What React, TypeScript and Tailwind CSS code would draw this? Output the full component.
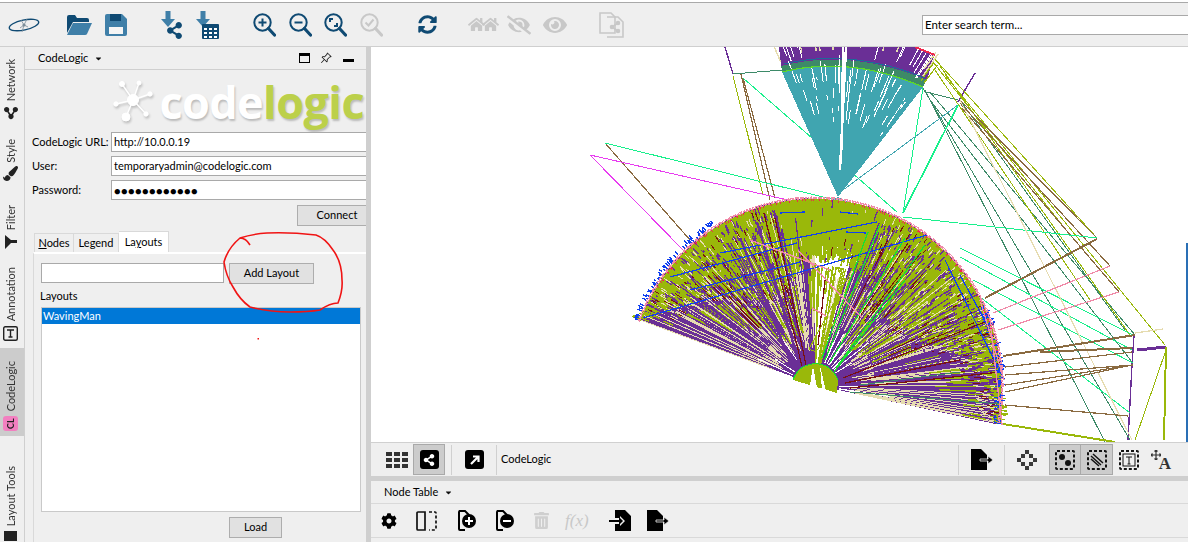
import React from "react";
import { FaShareAlt, FaSyncAlt, FaHome, FaEye, FaEyeSlash, FaCog, FaTrashAlt, FaPaintBrush, FaCaretDown } from "react-icons/fa";
import { BsPinAngle } from "react-icons/bs";

const NAVY = "#0f4a73";
const STEEL = "#3f7fa8";
const FONT = "font-['Lato',sans-serif]";

// --- graph drawing -----------------------------------------------------------

const COLORS = {
  purple: "#6a2f96",
  cream: "#e6dcb0",
  olive: "#9ab80a",
  darkred: "#7a1010",
  blue: "#1040f0",
  green: "#18e030",
  pink: "#f08aa8",
  teal: "#40a5b0",
  spring: "#18f08c",
  brown: "#8a6a40",
  moss: "#3d8a68",
  magenta: "#e83cf0",
  red: "#f0284c",
  white: "#ffffff",
};
type Tone = keyof typeof COLORS;

function rng(seed: number) {
  return () => {
    seed = (seed + 0x6d2b79f5) | 0;
    let t = Math.imul(seed ^ (seed >>> 15), 1 | seed);
    t = (t + Math.imul(t ^ (t >>> 7), 61 | t)) ^ t;
    return ((t ^ (t >>> 14)) >>> 0) / 4294967296;
  };
}

const polar = (cx: number, cy: number, r: number, deg: number) => {
  const a = (deg * Math.PI) / 180;
  return `${(cx + r * Math.cos(a)).toFixed(1)} ${(cy + r * Math.sin(a)).toFixed(1)}`;
};

const ray = (cx: number, cy: number, r0: number, r1: number, deg: number) =>
  `M${polar(cx, cy, r0, deg)}L${polar(cx, cy, r1, deg)}`;

// closed ring sector between two radii
function sector(cx: number, cy: number, r0: number, r1: number, a0: number, a1: number) {
  const big = a1 - a0 > 180 ? 1 : 0;
  return (
    `M${polar(cx, cy, r0, a0)}L${polar(cx, cy, r1, a0)}` +
    `A${r1} ${r1} 0 ${big} 1 ${polar(cx, cy, r1, a1)}` +
    `L${polar(cx, cy, r0, a1)}A${r0} ${r0} 0 ${big} 0 ${polar(cx, cy, r0, a0)}Z`
  );
}

const OLIVE_EDGE: [number, number][] = [
  [200, 176], [210, 152], [225, 118], [240, 92], [255, 96], [262, 112], [270, 122], [285, 122],
  [295, 112], [310, 88], [325, 96], [340, 112], [350, 146], [360, 166], [373, 178],
];

function oliveEdge(deg: number) {
  for (let i = 1; i < OLIVE_EDGE.length; i++) {
    const [a0, r0] = OLIVE_EDGE[i - 1];
    const [a1, r1] = OLIVE_EDGE[i];
    if (deg <= a1) return r0 + ((r1 - r0) * (deg - a0)) / (a1 - a0);
  }
  return 178;
}

function lowerFan() {
  const rand = rng(19);
  const cx = 815;
  const cy = 385;
  const R = 187;
  const layers: { tone: Tone; width: number; d: string }[] = [];
  const add = (tone: Tone, d: string, width = 1) => layers.push({ tone, width, d });

  // radial bundle
  let cream = "";
  let darkred = "";
  let olive = "";
  let white = "";
  for (let a = 200.4; a <= 372.2; a += 0.42) {
    const open = a > 270 && a < 286;
    const p = rand();
    if (open) {
      if (p < 0.16) cream += ray(cx, cy, 20, 110, a);
      else if (p < 0.3) olive += ray(cx, cy, 20, 120, a);
      continue;
    }
    if (p < 0.34) cream += ray(cx, cy, 34 + rand() * 30, R, a);
    else if (p < 0.39) darkred += ray(cx, cy, 50 + rand() * 60, R, a);
    else if (p < 0.42) white += ray(cx, cy, 24, 40 + rand() * 40, a);
  }
  const fill = `${sector(cx, cy, 20, R, 200.4, 270)}${sector(cx, cy, 20, R, 286, 372.2)}`;
  layers.push({ tone: "purple", width: -1, d: fill });
  add("cream", cream, 1);
  add("darkred", darkred, 1);
  add("white", white, 1);

  // olive crown under the arc
  for (let a = 200.4; a <= 372.2; a += 0.2) {
    const edge = oliveEdge(a);
    if (rand() < 0.93) olive += ray(cx, cy, edge + rand() * 22, R - 1, a);
    if (rand() < 0.22) olive += ray(cx, cy, edge - rand() * 50, edge - rand() * 10, a);
  }
  add("olive", olive, 1.4);

  // long streaks through the crown
  let purple = "";
  let red = "";
  let cream2 = "";
  for (let a = 206; a < 352; a += 0.5 + rand() * 2.2) {
    if (a > 264 && a < 290) continue;
    const p = rand();
    const outer = R - 10 - rand() * 40;
    if (p < 0.6) purple += ray(cx, cy, 60, outer, a);
    else if (p < 0.85) cream2 += ray(cx, cy, 70, outer, a);
    else red += ray(cx, cy, 80, outer, a);
  }
  add("purple", purple, 1.2);
  add("cream", cream2, 1);
  add("darkred", red, 1);

  // specks spread through the crown
  let speckPurple = "";
  let speckCream = "";
  let speckRed = "";
  for (let i = 0; i < 1500; i++) {
    const a = 204 + rand() * 166;
    if (a > 258 && a < 292 && rand() < 0.9) continue;
    const edge = oliveEdge(a);
    const r = edge - 10 + rand() * (R - edge + 4);
    const piece = ray(cx, cy, r, r + 2 + rand() * 7, a);
    const p = rand();
    if (p < 0.6) speckPurple += piece;
    else if (p < 0.88) speckCream += piece;
    else speckRed += piece;
  }
  add("purple", speckPurple, 1.3);
  add("cream", speckCream);
  add("darkred", speckRed);

  add("purple", "M800 366L757 222M805 365L776 215M794 370L740 238M812 362L806 262", 2.4);
  add("darkred", "M802 366L764 213M806 365L775 218M825 280L818 345M843 378L985 322M850 388L1000 372M845 383L960 360", 1.2);
  add("moss", "M850 392L1000 404M860 385L960 372", 1);
  add("olive", "M809 349L856 262L868 266L816 352Z", 1);
  add("cream", "M806 348L800 270", 1.6);

  // blue chords and edge jitter
  let blueEdge = "";
  for (let i = 0; i < 170; i++) {
    const left = i < 80;
    const a = left ? 200 + rand() * 38 : 335 + rand() * 37;
    const r = left ? R + rand() * 4 : R - 8 + rand() * 8;
    blueEdge += ray(cx, cy, r, r + 2 + rand() * 3, a);
  }
  add("blue", blueEdge, 1.4);
  add(
    "blue",
    "M643 318L927 235M670 277L797 243M720 253L877 222M690 290L800 262M780 213L805 212M840 212L858 214M846 232L866 233M945 260L1002 376M960 275L990 330",
    1.2,
  );
  add("green", "M825 360L880 225M830 362L905 238M836 368L925 245M822 358L868 232M834 372L905 280", 1.3);
  add("pink", "M798 250L862 318M750 240L830 270M812 308L826 316M990 320L1002 425M980 300L1004 380", 1.4);

  let rim = "";
  for (let a = 200; a < 372; a += 0.5) rim += ray(cx, cy, R - 1, R + 1.5, a);
  add("pink", rim, 1.2);
  let redRim = "";
  for (let a = 212; a < 350; a += rand() * 2.5 + 0.4) redRim += ray(cx, cy, R - 3, R - 1, a);
  add("red", redRim, 1);
  return layers;
}

function upperFan() {
  const rand = rng(7);
  const cx = 838;
  const cy = 197;
  let white = "";
  let cream = "";
  let olive = "";
  for (let a = 247; a <= 307; a += 0.5) {
    const p = rand();
    if (p < 0.16) cream += ray(cx, cy, 146 + rand() * 10, 175, a);
    else if (p < 0.26) white += ray(cx, cy, 142 + rand() * 14, 175, a);
    else if (a > 292 && p < 0.42) olive += ray(cx, cy, 143, 165, a);
  }
  for (let i = 0; i < 60; i++) {
    const a = 248 + rand() * 58;
    const r = 70 + rand() * 55;
    white += ray(cx, cy, r, r + 3 + rand() * 22, a);
  }
  return { white, cream, olive };
}

const LINES: [Tone, number, string][] = [
  ["purple", 1.4, "M725 47L733 74M958 102L975 73M1134 335L1132 365L1128 440"],
  ["moss", 1, "M733 74L782 70M923 88L1130 440M925 90L1105 442M930 92L1135 335M926 92L958 100M930 100L1132 362M960 100L1125 330"],
  ["olive", 1, "M733 76L763 195M933 57L1097 238M933 62L1070 235M940 66L1130 335M945 75L1165 345M935 70L1090 300M1166 350L1135 440"],
  ["brown", 1.2, "M741 74L770 200M743 78L775 198M605 143L690 240M960 100L1097 238M960 103L1110 266M962 108L1119 292"],
  ["spring", 1, "M743 78L897 212M605 143L835 200M903 213L923 88M903 217L1097 238M960 248L1133 335M960 257L1132 350M973 280L1133 363M980 297L1130 413"],
  ["magenta", 1, "M590 155L797 202M590 155L685 252"],
  ["teal", 1, "M843 190L958 105"],
  ["spring", 1.7, "M903 213L958 105"],
  ["cream", 1.2, "M960 100L1132 440M1135 333L1163 329"],
  ["brown", 2, "M985 298L1097 239M1003 356L1135 335M1040 352L1132 348"],
  ["brown", 1.2, "M1005 367L1132 352M1005 375L1133 365M1005 385L1132 365M1005 392L1132 365M1005 405L1128 416"],
  ["pink", 1.2, "M993 313L1110 266M998 330L1119 292"],
  ["purple", 3, "M1137 350L1166 347"],
  ["olive", 2, "M1166 347L1164 440M1003 424L1115 442"],
];

function GraphCanvas() {
  const lower = lowerFan();
  const upper = upperFan();
  return (
    <svg viewBox="371 47 817 395" className="w-full h-full block" shapeRendering="crispEdges">
      {LINES.map(([tone, width, d], i) => (
        <path key={i} d={d} stroke={COLORS[tone]} strokeWidth={width} fill="none" />
      ))}
      {/* upper fan */}
      <path d="M838 197L782 72Q850 55 923 87Z" fill={COLORS.teal} />
      <path d="M782 72Q850 55 923 87L927 78Q850 46 781 64Z" fill={COLORS.moss} />
      <path d="M781 66Q850 48 927 80L934 55L915 47H779Z" fill={COLORS.purple} />
      <path d={upper.cream} stroke={COLORS.cream} strokeWidth={1.4} fill="none" />
      <path d={upper.olive} stroke={COLORS.olive} strokeWidth={1.2} fill="none" />
      <path d={upper.white} stroke="#fff" strokeWidth={1} fill="none" />
      <path d="M782 72Q850 55 923 87" stroke="#5bd82a" strokeWidth={1.2} fill="none" />
      <path d="M784 64Q850 48 925 78" stroke="#1d6a9a" strokeWidth={1} fill="none" />
      <path d="M915 47L935 55" stroke={COLORS.red} strokeWidth={2} fill="none" />
      <path d="M843 47L842 150M846 47L840 170" stroke="#fff" strokeWidth={2.5} fill="none" />
      <path d="M838 197L856 206L820 206Z" fill={COLORS.teal} />

      {/* lower fan */}
      {lower.map((l, i) =>
        l.width < 0 ? (
          <path key={i} d={l.d} fill={COLORS[l.tone]} />
        ) : (
          <path key={i} d={l.d} stroke={COLORS[l.tone]} strokeWidth={l.width} fill="none" />
        ),
      )}
      <path d="M793 380L837 393L838 380Q830 362 812 364Q798 366 793 380Z" fill={COLORS.olive} />
      <path d="M793 380Q798 366 812 364Q830 362 838 380" stroke={COLORS.green} fill="none" />
      <path d="M810 385L813 366L817 388ZM822 390L820 366L826 391Z" fill="#fff" />
      <path d="M1187 243V442" stroke="#2a6fb5" strokeWidth={2} />
    </svg>
  );
}

// --- icons ------------------------------------------------------------------

function AppLogo() {
  return (
    <svg viewBox="0 0 32 18" className="w-8 h-[18px]" fill="none" stroke={NAVY}>
      <ellipse cx="16" cy="9" rx="15" ry="5" strokeWidth="1.4" transform="rotate(-12 16 9)" />
      <path d="M16 9L13 4M16 9L19 3M16 9L12 12M16 9L20 11M16 9L14 16" stroke="#7b8d99" strokeWidth="0.8" />
      <circle cx="16" cy="9" r="1.6" fill="#7b8d99" stroke="none" />
    </svg>
  );
}

function FolderIcon() {
  return (
    <svg viewBox="0 0 25 22" className="w-[25px] h-[22px]">
      <path d="M0 3q0-2 2-2h6l2 3h10q2 0 2 2v2H6L0 19Z" fill={NAVY} />
      <path d="M6 9h19l-5 11q-.5 1-2 1H0Z" fill={STEEL} />
    </svg>
  );
}

function SaveIcon() {
  return (
    <svg viewBox="0 0 22 22" className="w-[22px] h-[22px]">
      <path d="M0 2q0-2 2-2h15l5 5v15q0 2-2 2H2q-2 0-2-2Z" fill={STEEL} />
      <path d="M5 0h11v7H5Z" fill={NAVY} />
      <path d="M4 13h14v7H4Z" fill="#f5f5f5" />
    </svg>
  );
}

function DownArrow({ tone }: { tone: string }) {
  return (
    <svg viewBox="0 0 14 16" className="w-[14px] h-4">
      <path d="M4.5 0h5v8H14L7 16 0 8h4.5Z" fill={tone} />
    </svg>
  );
}

function ShareDown() {
  return (
    <div className="relative w-[22px] h-7">
      <DownArrow tone={STEEL} />
      <FaShareAlt className="absolute right-0 bottom-0 text-[17px]" color={NAVY} />
    </div>
  );
}

function TableDown() {
  return (
    <div className="relative w-[23px] h-7">
      <div className="absolute left-0 top-0">
        <DownArrow tone={STEEL} />
      </div>
      <svg viewBox="0 0 17 15" className="absolute right-0 bottom-0 w-[17px] h-[15px]">
        <path d="M0 1q0-1 1-1h15q1 0 1 1v13q0 1-1 1H1q-1 0-1-1Z" fill={NAVY} />
        <path d="M2 4h3v2H2Zm5 0h3v2H7Zm5 0h3v2h-3ZM2 8h3v2H2Zm5 0h3v2H7Zm5 0h3v2h-3ZM2 12h3v2H2Zm5 0h3v2H7Zm5 0h3v2h-3Z" fill="#fff" />
      </svg>
    </div>
  );
}

function Magnifier({ tone, mark }: { tone: string; mark: string }) {
  return (
    <svg viewBox="0 0 23 24" className="w-[23px] h-6" fill="none" stroke={tone}>
      <circle cx="9.5" cy="9.5" r="8.2" strokeWidth="2" />
      <path d="M15.5 15.5L21.5 22" strokeWidth="3.2" strokeLinecap="round" />
      <path d={mark} strokeWidth="2" />
    </svg>
  );
}

function DocShare() {
  return (
    <svg viewBox="0 0 25 26" className="w-[25px] h-[26px]" fill="none" stroke="#c8c8c8" strokeWidth="1.6">
      <path d="M1 1h11l4 4v16H1Z" />
      <path d="M8 5h11l5 5v15H8" />
      <circle cx="13" cy="15" r="1.5" fill="#c8c8c8" />
      <circle cx="19" cy="11" r="1.5" fill="#c8c8c8" />
      <circle cx="19" cy="19" r="1.5" fill="#c8c8c8" />
      <path d="M13 15L19 11M13 15L19 19" />
    </svg>
  );
}

function DocArrow({ incoming }: { incoming?: boolean }) {
  return (
    <svg viewBox="0 0 22 21" className="w-[22px] h-[21px]">
      {incoming ? (
        <>
          <path d="M6 0h10l6 6v15H6v-7h5v2l5-5-5-5v2H6Z" />
          <path d="M0 10h10V7l4 4-4 4v-3H0Z" />
        </>
      ) : (
        <>
          <path d="M0 0h10l6 6v15H0Z" />
          <path d="M9 10h8V7l5 4-5 4v-3H9Z" stroke="#efefef" strokeWidth="0.8" />
        </>
      )}
    </svg>
  );
}

function DocBadge({ minus }: { minus?: boolean }) {
  return (
    <svg viewBox="0 0 18 21" className="w-[18px] h-[21px]" fill="none">
      <path d="M7 1H2Q1 1 1 2v17q0 1 1 1h5" stroke="#000" strokeWidth="2" />
      <path d="M1 1h6l4 4" stroke="#000" strokeWidth="2" />
      <circle cx="11" cy="11" r="7" fill="#000" />
      <path d={minus ? "M7 11h8" : "M7 11h8M11 7v8"} stroke="#fff" strokeWidth="2" />
    </svg>
  );
}

function DashBox({ children }: { children: React.ReactNode }) {
  return (
    <svg viewBox="0 0 20 20" className="w-5 h-5" fill="none">
      <rect x="1" y="1" width="18" height="18" rx="1" stroke="#111" strokeWidth="2" strokeDasharray="3 2" />
      {children}
    </svg>
  );
}

function Bar({ className = "" }: { className?: string }) {
  return <div className={`w-px h-[30px] bg-[#d0d0d0] ${className}`} />;
}

function SideTab({ label, icon, className }: { label: string; icon: React.ReactNode; className: string }) {
  return (
    <div className={`flex flex-col items-center shrink-0 pr-[3px] ${className}`}>
      <span className="[writing-mode:vertical-rl] rotate-180 text-[11px] leading-[14px] text-[#333] whitespace-nowrap shrink-0">{label}</span>
      {icon}
    </div>
  );
}

function Button({ label, className }: { label: string; className: string }) {
  return (
    <button className={`bg-[#e1e1e1] border border-[#adadad] text-[11px] text-black flex items-center justify-center shrink-0 ${className}`}>
      {label}
    </button>
  );
}

function Field({ label, value, secret }: { label: string; value: string; secret?: boolean }) {
  return (
    <div className="flex items-center h-5">
      <span className="w-[79px] shrink-0 text-[11px] text-black whitespace-nowrap">{label}</span>
      <div className="w-[270px] h-5 shrink-0 bg-white border border-[#a9a9a9] pl-[2px] flex items-center text-[11px] text-black whitespace-nowrap">
        {secret ? <span className="tracking-[0.4px] leading-none">{value}</span> : value}
      </div>
    </div>
  );
}

// --- page -------------------------------------------------------------------

export default function App() {
  return (
    <div className={`relative w-[1188px] h-[542px] overflow-hidden bg-[#efefef] flex flex-col ${FONT}`}>
      {/* top toolbar */}
      <div className="h-[47px] shrink-0 bg-white pt-[2px]">
        <div className="h-[45px] border-t border-b border-t-[#a9a9a9] border-b-[#cfcfcf] bg-[#efefef] flex items-center pl-2">
          <AppLogo />
          <div className="ml-[27px]"><FolderIcon /></div>
          <div className="ml-[13px]"><SaveIcon /></div>
          <div className="ml-[34px]"><ShareDown /></div>
          <div className="ml-[13px]"><TableDown /></div>
          <div className="ml-[34px]"><Magnifier tone={NAVY} mark="M9.5 5.5v8M5.5 9.5h8" /></div>
          <div className="ml-[13px]"><Magnifier tone={NAVY} mark="M5.5 9.5h8" /></div>
          <div className="ml-3"><Magnifier tone={NAVY} mark="M6 9V6h3M13 10v3h-3" /></div>
          <div className="ml-[13px]"><Magnifier tone="#c8c8c8" mark="M5.5 9.5l3 3 5-6" /></div>
          <FaSyncAlt className="ml-[35px] text-[19px]" color={NAVY} />
          <div className="ml-[31px] flex w-[30px]">
            <FaHome className="text-[17px] shrink-0" color="#c8c8c8" />
            <FaHome className="text-[17px] shrink-0 -ml-[3px]" color="#c8c8c8" />
          </div>
          <FaEyeSlash className="ml-[9px] text-[24px]" color="#c8c8c8" />
          <FaEye className="ml-3 text-[24px]" color="#c8c8c8" />
          <div className="ml-8"><DocShare /></div>
          <div className="ml-auto w-[266px] h-5 bg-white border border-[#a9a9a9] border-r-0 pl-[2px] flex items-center text-[11.5px] text-black">
            Enter search term...
          </div>
        </div>
      </div>

      <div className="flex-1 min-h-0 flex">
        {/* vertical tabs */}
        <div className="w-[25px] shrink-0 border-r border-[#cfcfcf] flex flex-col overflow-hidden">
          <SideTab
            label="Network"
            className="h-[78px] pt-3"
            icon={<FaShareAlt className="mt-[5px] text-[14px] shrink-0 -rotate-90" color="#222" />}
          />
          <SideTab
            label="Style"
            className="h-[65px] pt-[14px]"
            icon={<FaPaintBrush className="mt-[3px] text-[15px] shrink-0" color="#222" />}
          />
          <SideTab
            label="Filter"
            className="h-[64px] pt-[15px]"
            icon={
              <svg viewBox="0 0 12 14" className="mt-[5px] w-[12px] h-[14px] shrink-0">
                <path d="M0 0l6 5h6v3H6l-6 6Z" fill="#222" />
              </svg>
            }
          />
          <SideTab
            label="Annotation"
            className="h-[94px] pt-[13px]"
            icon={
              <svg viewBox="0 0 15 15" className="mt-[5px] w-[15px] h-[15px] shrink-0" fill="none" stroke="#222">
                <rect x="0.7" y="0.7" width="13.6" height="13.6" rx="1.5" strokeWidth="1.4" />
                <path d="M4 4h7M7.5 4v7M5.5 11h4" strokeWidth="1.4" />
              </svg>
            }
          />
          <SideTab
            label="CodeLogic"
            className="h-[88px] pt-[13px] bg-[#cccccc]"
            icon={
              <span className="mt-[5px] w-[15px] h-[15px] shrink-0 rounded-[3px] bg-[#f27fc0] flex items-center justify-center [writing-mode:vertical-rl] rotate-180 text-[9px] font-bold leading-none text-[#222]">
                CL
              </span>
            }
          />
          <SideTab
            label="Layout Tools"
            className="h-[106px] pt-[30px]"
            icon={
              <svg viewBox="0 0 15 10" className="mt-[5px] w-[15px] h-[10px] shrink-0">
                <path d="M1 0h13v10H1Z" fill="#222" />
              </svg>
            }
          />
        </div>

        {/* side panel */}
        <div className="w-[341px] shrink-0 flex flex-col overflow-hidden">
          <div className="h-[23px] shrink-0 border-b border-[#cfcfcf] flex items-center pl-[13px]">
            <span className="text-[11px] text-black">CodeLogic</span>
            <FaCaretDown className="ml-[6px] text-[9px]" color="#111" />
            <div className="w-[11px] h-[10px] ml-auto border border-black border-t-[3px]" />
            <BsPinAngle className="ml-[10px] text-[12px]" color="#111" />
            <div className="w-[11px] h-[3px] bg-black ml-[11px] mr-3 mt-[5px]" />
          </div>

          {/* logo */}
          <div className="h-[62px] shrink-0 flex items-center justify-end pr-[2px]">
            <svg viewBox="0 0 40 42" className="w-10 h-[42px] mr-[6px] drop-shadow-[1px_2px_1px_rgba(0,0,0,0.2)]" fill="#fff" stroke="#fff">
              <path d="M20 20L9 4M20 20L26 3M20 20L37 14M20 20L33 34M20 20L13 37M20 20L3 24" strokeWidth="1.4" />
              <circle cx="20" cy="20" r="5.5" />
              <circle cx="9" cy="4" r="2.5" />
              <circle cx="26" cy="3" r="2" />
              <circle cx="37" cy="14" r="2.2" />
              <circle cx="33" cy="34" r="2.2" />
              <circle cx="13" cy="37" r="4" />
              <circle cx="3" cy="24" r="2.2" />
            </svg>
            <span className="font-['Open_Sans',sans-serif] font-bold text-[45px] leading-none tracking-[-0.6px] [text-shadow:1px_2px_2px_rgba(0,0,0,0.22)] whitespace-nowrap">
              <span className="text-white">code</span>
              <span className="text-[#bcd04a]">logic</span>
            </span>
          </div>

          {/* connection form */}
          <div className="pl-[7px] flex flex-col gap-1">
            <Field label="CodeLogic URL:" value="http://10.0.0.19" />
            <Field label="User:" value="temporaryadmin@codelogic.com" />
            <Field label="Password:" value="●●●●●●●●●●●●" secret />
          </div>
          <div className="pl-[272px] mt-[5px] shrink-0">
            <Button label="Connect" className="w-[80px] h-[21px]" />
          </div>

          {/* tabs */}
          <div className="mt-[5px] h-[21px] pl-[9px] flex items-end shrink-0 text-[11px] text-black">
            <div className="w-10 h-[19px] border border-b-0 border-[#d9d9d9] flex items-center justify-center"><span><u>N</u>odes</span></div>
            <div className="w-[45px] h-[19px] border border-b-0 border-l-0 border-[#d9d9d9] flex items-center justify-center"><span>Le<u>g</u>end</span></div>
            <div className="w-[50px] h-[21px] bg-white border border-b-0 border-l-0 border-[#d9d9d9] flex items-center justify-center"><span>La<u>y</u>outs</span></div>
          </div>
          <div className="flex-1 min-h-0 ml-2 border-l border-t-2 border-[#ffffff] border-l-[#d9d9d9] flex flex-col pl-[7px]">
            <div className="flex mt-[9px] shrink-0">
              <div className="w-[183px] h-5 bg-white border border-[#a9a9a9]" />
              <Button label="Add Layout" className="w-[85px] h-[21px] ml-[5px]" />
            </div>
            <div className="mt-[3px] h-[18px] text-[11px] leading-[18px] text-black -ml-px">Layouts</div>
            <div className="mt-[2px] w-[320px] h-[205px] shrink-0 bg-white border border-[#c9c9c9]">
              <div className="h-4 bg-[#0078d7] text-white text-[11px] leading-4 pl-px">WavingMan</div>
            </div>
            <div className="pl-[188px] mt-[5px]">
              <Button label="Load" className="w-[53px] h-[21px]" />
            </div>
          </div>
        </div>

        <div className="w-[5px] shrink-0 bg-[#cfcfcf]" />

        {/* network view and table */}
        <div className="flex-1 min-w-0 flex flex-col">
          <div className="h-[395px] shrink-0 bg-white">
            <GraphCanvas />
          </div>

          <div className="h-[34px] shrink-0 border-t border-[#d0d0d0] flex items-center pl-[15px] text-black">
            <svg viewBox="0 0 22 16" className="w-[22px] h-4" fill="#333">
              <path d="M0 0h6v4H0Zm8 0h6v4H8Zm8 0h6v4h-6ZM0 6h6v4H0Zm8 0h6v4H8Zm8 0h6v4h-6ZM0 12h6v4H0Zm8 0h6v4H8Zm8 0h6v4h-6Z" />
            </svg>
            <div className="ml-[5px] w-[32px] h-[31px] bg-[#cccccc] border border-[#a9a9a9] flex items-center justify-center">
              <div className="w-[19px] h-[19px] rounded-[3px] bg-black flex items-center justify-center">
                <FaShareAlt className="text-[12px]" color="#fff" />
              </div>
            </div>
            <Bar className="ml-[6px]" />
            <div className="ml-[13px] w-[19px] h-[19px] rounded-[3px] bg-black flex items-center justify-center">
              <svg viewBox="0 0 12 12" className="w-3 h-3" fill="none" stroke="#fff" strokeWidth="2.2">
                <path d="M2 10L9 3M4 2.5h5.5V8" />
              </svg>
            </div>
            <Bar className="ml-3" />
            <span className="ml-1 text-[11px]">CodeLogic</span>

            <Bar className="ml-auto" />
            <div className="ml-3"><DocArrow /></div>
            <Bar className="ml-[11px]" />
            <svg viewBox="0 0 20 20" className="ml-3 w-5 h-5" fill="#3a3a3a">
              <path d="M8 0h4v4H8ZM4 4h4v4H4Zm8 0h4v4h-4ZM0 8h4v4H0Zm16 0h4v4h-4ZM4 12h4v4H4Zm8 0h4v4h-4ZM8 16h4v4H8Z" />
            </svg>
            <div className="ml-[12px] w-8 h-[31px] bg-[#cccccc] border border-[#a9a9a9] flex items-center justify-center">
              <DashBox>
                <circle cx="7" cy="7" r="3" fill="#111" />
                <circle cx="13" cy="13" r="3" fill="#111" />
              </DashBox>
            </div>
            <div className="w-8 h-[31px] bg-[#cccccc] border border-l-0 border-[#a9a9a9] flex items-center justify-center">
              <DashBox>
                <path d="M4 6l10 9M6 4l10 9M4 9l8 7" stroke="#111" strokeWidth="1.5" />
              </DashBox>
            </div>
            <div className="ml-[6px]">
              <DashBox>
                <rect x="4" y="4" width="12" height="12" stroke="#111" />
                <path d="M7 7h6M10 7v7M8.5 14h3" stroke="#111" />
              </DashBox>
            </div>
            <div className="ml-3 mr-[17px] relative w-5 h-5">
              <svg viewBox="0 0 10 10" className="absolute left-0 top-0 w-[10px] h-[10px]" fill="none" stroke="#333" strokeWidth="1.2">
                <path d="M5 0v10M0 5h10M3.5 1.5L5 0l1.5 1.5M3.5 8.5L5 10l1.5-1.5M1.5 3.5L0 5l1.5 1.5M8.5 3.5L10 5 8.5 6.5" />
              </svg>
              <span className="absolute right-0 bottom-[-2px] font-['Liberation_Serif',serif] font-bold text-[17px] leading-none text-[#333]">A</span>
            </div>
          </div>

          <div className="h-[5px] shrink-0 bg-[#cfcfcf]" />

          <div className="h-[23px] shrink-0 border-b border-[#d9d9d9] flex items-center pl-[13px]">
            <span className="text-[11px] text-black">Node Table</span>
            <FaCaretDown className="ml-[6px] text-[9px]" color="#111" />
          </div>

          <div className="h-[34px] shrink-0 border-b border-[#d9d9d9] flex items-center pl-[10px]">
            <FaCog className="text-[16px]" color="#000" />
            <svg viewBox="0 0 21 20" className="ml-[19px] w-[21px] h-5" fill="none" stroke="#111" strokeWidth="1.7">
              <path d="M9 1H2Q1 1 1 2v16q0 1 1 1h7Z" />
              <path d="M13 1h6q1 0 1 1v16q0 1-1 1h-6" strokeDasharray="3 2" />
            </svg>
            <div className="ml-[21px]"><DocBadge /></div>
            <div className="ml-5"><DocBadge minus /></div>
            <FaTrashAlt className="ml-[19px] text-[17px]" color="#cfcfcf" />
            <span className="ml-[15px] w-7 font-['Liberation_Serif',serif] italic text-[17px] leading-none text-[#c8c8c8] whitespace-nowrap">f(x)</span>
            <div className="ml-4"><DocArrow incoming /></div>
            <div className="ml-4"><DocArrow /></div>
          </div>
        </div>
      </div>

      {/* hand drawn annotation on the screenshot */}
      <svg className="absolute left-0 top-0 w-[1188px] h-[542px] pointer-events-none" viewBox="0 0 1188 542" fill="none">
        <path
          d="M250 245Q246 238 240 238Q228 248 224 262Q226 276 233 287Q240 300 250 307Q270 312 290 312Q308 312 320 310Q330 303 338 303Q343 290 342 280Q342 262 333 250Q325 238 316 235Q290 232 267 233Q252 234 240 238"
          stroke="#f01414"
          strokeWidth="1.6"
        />
        <rect x="257.5" y="338" width="1.5" height="1.5" fill="#f01414" />
      </svg>
    </div>
  );
}
